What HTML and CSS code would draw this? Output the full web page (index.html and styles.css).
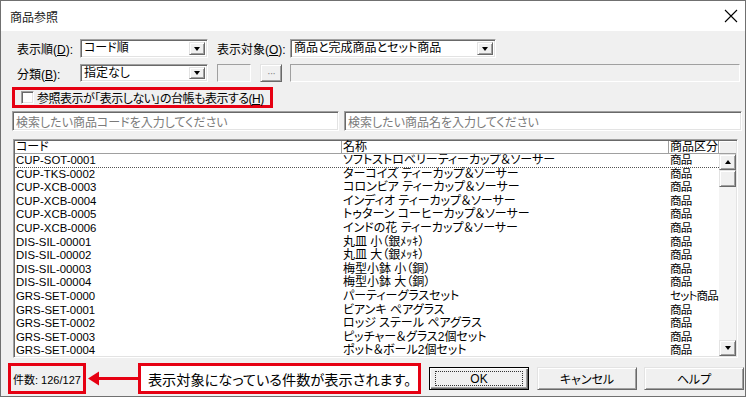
FILE: index.html
```html
<!DOCTYPE html>
<html lang="ja">
  <head>
    <meta charset="UTF-8" />
    <meta name="viewport" content="width=device-width, initial-scale=1.0" />
    <title>商品参照</title>
    <link rel="stylesheet" href="styles.css">
  </head>
  <body>
    <div class="window">
      <div class="titlebar">
        <span class="title">商品参照</span>
        <svg class="close" width="14" height="14" viewBox="0 0 14 14">
          <path d="M1 1 L13 13 M13 1 L1 13" stroke="#000" stroke-width="1.1" fill="none" />
        </svg>
      </div>

      <div class="row row-1">
        <span class="lbl">表示順(<u>D</u>):</span>
        <div class="combo combo-order"><span class="combo-text">コード順</span><span class="combo-btn"></span></div>
        <span class="lbl lbl-target">表示対象(<u>O</u>):</span>
        <div class="combo combo-target"><span class="combo-text">商品と完成商品とセット商品</span><span class="combo-btn"></span></div>
      </div>

      <div class="row row-2">
        <span class="lbl">分類(<u>B</u>):</span>
        <div class="combo combo-order"><span class="combo-text">指定なし</span><span class="combo-btn"></span></div>
        <div class="field disabled field-small"></div>
        <div class="btn btn-dots">···</div>
        <div class="field disabled field-wide"></div>
      </div>

      <div class="check-row">
        <span class="checkbox"></span>
        <span class="check-label">参照表示が「表示しない」の台帳も表示する(<u>H</u>)</span>
      </div>

      <div class="search-row">
        <div class="field search-code"><span class="placeholder">検索したい商品コードを入力してください</span></div>
        <div class="field search-name"><span class="placeholder">検索したい商品名を入力してください</span></div>
      </div>

      <div class="list">
        <div class="list-head">
          <div class="hcell">コード</div>
          <div class="hcell">名称</div>
          <div class="hcell">商品区分</div>
          <div class="hcell corner"></div>
        </div>
        <div class="list-body">
          <div class="rows" id="rows"></div>
          <div class="scrollbar">
            <div class="sb-btn sb-up"></div>
            <div class="sb-thumb"></div>
            <div class="sb-track"></div>
            <div class="sb-btn sb-down"></div>
          </div>
        </div>
      </div>

      <div class="bottom">
        <div class="count-box">件数: 126/127</div>
        <svg class="arrow" width="52" height="31" viewBox="0 0 52 31">
          <path d="M8 15.5 L52 15.5" stroke="#e60012" stroke-width="3" />
          <polygon points="2,15.5 13,8.5 13,22.5" fill="#e60012" />
        </svg>
        <div class="callout">表示対象になっている件数が表示されます。</div>
        <div class="btn btn-push btn-default"><span class="focus">OK</span></div>
        <div class="btn btn-push btn-cancel">キャンセル</div>
        <div class="btn btn-push btn-help">ヘルプ</div>
      </div>
    </div>
    <script>
      const items = [
        ['CUP-SOT-0001', 'ソフトストロベリーティーカップ＆ソーサー', '商品'],
        ['CUP-TKS-0002', 'ターコイズ ティーカップ＆ソーサー', '商品'],
        ['CUP-XCB-0003', 'コロンビア ティーカップ＆ソーサー', '商品'],
        ['CUP-XCB-0004', 'インディオ ティーカップ＆ソーサー', '商品'],
        ['CUP-XCB-0005', 'トゥターン コーヒーカップ＆ソーサー', '商品'],
        ['CUP-XCB-0006', 'インドの花 ティーカップ＆ソーサー', '商品'],
        ['DIS-SIL-00001', '丸皿 小（銀ﾒｯｷ）', '商品'],
        ['DIS-SIL-00002', '丸皿 大（銀ﾒｯｷ）', '商品'],
        ['DIS-SIL-00003', '梅型小鉢 小（銅）', '商品'],
        ['DIS-SIL-00004', '梅型小鉢 大（銅）', '商品'],
        ['GRS-SET-0000', 'パーティーグラスセット', 'セット商品'],
        ['GRS-SET-0001', 'ビアンキ ペアグラス', '商品'],
        ['GRS-SET-0002', 'ロッジ ステール ペアグラス', '商品'],
        ['GRS-SET-0003', 'ピッチャー＆グラス2個セット', '商品'],
        ['GRS-SET-0004', 'ポット＆ボール2個セット', '商品'],
      ];

      const rows = document.getElementById('rows');
      items.forEach((item, i) => {
        const row = document.createElement('div');
        row.classList.add('item');
        if (i === 0) row.classList.add('focused');
        ['code', 'name', 'kind'].forEach((cls, j) => {
          const cell = document.createElement('span');
          cell.classList.add(cls);
          cell.innerText = item[j];
          row.appendChild(cell);
        });
        rows.appendChild(row);
      });
    </script>
  </body>
</html>
```

FILE: styles.css
```css
body {
  margin: 0;
  background: #ffffff;
  font-family: "Liberation Sans", "Noto Sans CJK JP", sans-serif;
  font-size: 12px;
  color: #000;
  font-feature-settings: "palt";
}
.window {
  width: 744px;
  height: 395px;
  border: 1px solid #707070;
  background: #f0f0f0;
  overflow: hidden;
}
.titlebar {
  height: 30px;
  background: #ffffff;
  display: flex;
  align-items: center;
  justify-content: space-between;
  padding: 0 7px 0 9px;
}
.title {
  font-size: 12px;
  color: #1a1a1a;
}
.row {
  display: flex;
  align-items: center;
  padding-left: 16px;
}
.row-1 {
  margin-top: 8px;
  height: 19px;
}
.row-2 {
  margin-top: 6px;
  height: 18px;
}
.lbl {
  width: 63px;
  white-space: nowrap;
}
.lbl-target {
  width: 73px;
  margin-left: 9px;
}

/* sunken 3d boxes */
.combo,
.field,
.checkbox,
.list {
  box-sizing: border-box;
  border: 1px solid;
  border-color: #a0a0a0 #ffffff #ffffff #a0a0a0;
  box-shadow: inset 1px 1px 0 #696969, inset -1px -1px 0 #e3e3e3;
  background: #ffffff;
}
.combo {
  height: 100%;
  display: flex;
  align-items: center;
  padding: 2px 2px 2px 3px;
}
.combo-order {
  width: 128px;
}
.combo-target {
  width: 206px;
}
.combo-text {
  flex: 1;
  white-space: nowrap;
  line-height: 13px;
}
.combo-btn,
.sb-btn,
.sb-thumb,
.btn {
  box-sizing: border-box;
  background: #f0f0f0;
  border: 1px solid;
  border-color: #e3e3e3 #696969 #696969 #e3e3e3;
  box-shadow: inset 1px 1px 0 #ffffff, inset -1px -1px 0 #a0a0a0;
}
.combo-btn {
  width: 16px;
  height: 100%;
  display: flex;
  align-items: center;
  justify-content: center;
}
.combo-btn::after,
.sb-down::after {
  content: "";
  border-left: 3.5px solid transparent;
  border-right: 3.5px solid transparent;
  border-top: 4px solid #000;
}
.sb-up::after {
  content: "";
  border-left: 3.5px solid transparent;
  border-right: 3.5px solid transparent;
  border-bottom: 4px solid #000;
}
.field {
  height: 100%;
}
.field.disabled {
  background: #f0f0f0;
  box-shadow: none;
  border-color: #a0a0a0 #ffffff #ffffff #a0a0a0;
}
.field-small {
  width: 34px;
  margin-left: 9px;
}
.btn-dots {
  width: 22px;
  height: 100%;
  margin-left: 9px;
  color: #8a8a8a;
  font-size: 11px;
  display: flex;
  align-items: center;
  justify-content: center;
  letter-spacing: -1px;
}
.field-wide {
  width: 450px;
  margin-left: 8px;
}

.check-row {
  box-sizing: border-box;
  margin: 5px 0 0 11px;
  width: 261px;
  height: 21px;
  border: 3px solid #e60012;
  display: flex;
  align-items: center;
  padding-left: 6px;
}
.checkbox {
  flex: none;
  width: 13px;
  height: 13px;
}
.check-label {
  margin-left: 3px;
  white-space: nowrap;
  letter-spacing: -0.5px;
}

.search-row {
  margin: 3px 0 0 11px;
  display: flex;
  gap: 5px;
  height: 20px;
}
.search-code {
  width: 327px;
}
.search-name {
  width: 398px;
}
.search-row .field {
  display: flex;
  align-items: center;
  padding-left: 3px;
}
.placeholder {
  color: #7a7a7a;
}

.list {
  margin: 8px 0 0 12px;
  width: 725px;
  height: 219px;
  padding: 1px;
  display: flex;
  flex-direction: column;
}
.list-head {
  display: grid;
  grid-template-columns: 327px 327px 50px 17px;
  height: 13px;
  flex: none;
}
.hcell {
  box-sizing: border-box;
  border-right: 1px solid #a0a0a0;
  border-bottom: 1px solid #a0a0a0;
  padding-left: 1px;
  line-height: 12px;
  white-space: nowrap;
}
.hcell.corner {
  background: #f0f0f0;
  border-right: none;
  box-shadow: inset 1px 1px 0 #ffffff;
}
.list-body {
  flex: 1;
  display: flex;
  min-height: 0;
}
.rows {
  flex: 1;
  overflow: hidden;
}
.item {
  box-sizing: border-box;
  display: grid;
  grid-template-columns: 327px 327px 50px;
  height: 13.6px;
  line-height: 13px;
  white-space: nowrap;
}
.item span {
  padding-left: 1px;
}
.item .code {
  font-size: 11.4px;
}
.item .kind {
  font-size: 11.5px;
  letter-spacing: -0.8px;
}
.item.focused {
  border-bottom: 1px dotted #555;
}
.scrollbar {
  width: 17px;
  display: flex;
  flex-direction: column;
  background: #f4f4f4;
}
.sb-btn {
  height: 16px;
  display: flex;
  align-items: center;
  justify-content: center;
  flex: none;
}
.sb-thumb {
  height: 17px;
  flex: none;
}
.sb-track {
  flex: 1;
}

.bottom {
  margin-top: 5px;
  height: 31px;
  display: flex;
  align-items: center;
  padding-left: 7px;
}
.count-box {
  box-sizing: border-box;
  width: 78px;
  height: 31px;
  border: 3px solid #e60012;
  background: #f0f0f0;
  font-size: 11px;
  display: flex;
  align-items: center;
  padding-left: 2px;
  white-space: nowrap;
}
.arrow {
  flex: none;
}
.callout {
  box-sizing: border-box;
  width: 283px;
  height: 31px;
  border: 3px solid #e60012;
  background: #ffffff;
  font-size: 14.2px;
  display: flex;
  align-items: center;
  justify-content: center;
  white-space: nowrap;
}
.btn-push {
  width: 100px;
  height: 23px;
  display: flex;
  align-items: center;
  justify-content: center;
}
.btn-default {
  margin-left: 8px;
  border-color: #000;
  box-shadow: inset 1px 1px 0 #ffffff, inset -1px -1px 0 #696969, inset -2px -2px 0 #a0a0a0;
}
.focus {
  box-sizing: border-box;
  width: 88px;
  height: 15px;
  border: 1px dotted #333;
  display: flex;
  align-items: center;
  justify-content: center;
}
.btn-cancel {
  margin-left: 8px;
}
.btn-help {
  margin-left: 7px;
}
```
